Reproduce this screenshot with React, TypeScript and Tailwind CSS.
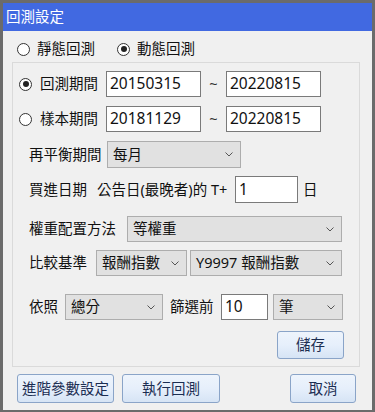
import React from 'react';

const font = { fontFamily: '"Noto Sans", "Noto Sans CJK TC", sans-serif' };

const Radio = ({ checked }: { checked?: boolean }) => (
  <span className="w-[13px] h-[13px] shrink-0 rounded-full border border-[#333] bg-white flex items-center justify-center">
    {checked && <span className="w-[6px] h-[6px] rounded-full bg-[#222]" />}
  </span>
);

const Chevron = () => (
  <svg width="8" height="5" viewBox="0 0 8 5" className="shrink-0">
    <path d="M0.5 0.5 L4 4 L7.5 0.5" fill="none" stroke="#555" strokeWidth="1" />
  </svg>
);

const Select = ({ value, w, h = 'h-[26px]' }: { value: string; w: string; h?: string }) => (
  <div className={`${w} ${h} shrink-0 bg-[#e1e1e1] border border-[#adadad] flex items-center justify-between pl-[5px] pr-[7px]`}>
    <span className="text-[14.5px] text-[#111] whitespace-nowrap">{value}</span>
    <Chevron />
  </div>
);

const Input = ({ value, w, h = 'h-[26px]' }: { value: string; w: string; h?: string }) => (
  <div className={`${w} ${h} shrink-0 bg-white border border-[#7a7a7a] flex items-center pl-[3px]`}>
    <span className="text-[15.5px] text-[#111] leading-none">{value}</span>
  </div>
);

const Button = ({ label, w, h }: { label: string; w: string; h: string }) => (
  <div className={`${w} ${h} shrink-0 rounded-[3px] border border-[#8aa4c8] bg-gradient-to-b from-[#eef4fc] via-[#e6effb] to-[#d6e4f5] flex items-center justify-center text-[14.5px] text-[#1b2d52]`}>
    {label}
  </div>
);

const App = () => {
  return (
    <div style={font} className="w-[375px] h-[412px] border-x-[3px] border-t-[3px] border-b-[2px] border-[#6b6b6b] bg-[#f0f0f0] flex flex-col overflow-hidden">
      {/* Title bar */}
      <div className="h-[28px] shrink-0 bg-[#4169e1] flex items-center pl-[3px] text-white text-[14.5px]">
        回測設定
      </div>

      {/* Mode radios */}
      <div className="mt-[8px] h-[20px] flex items-center pl-[14px] text-[14.5px] text-[#111]">
        <Radio />
        <span className="ml-[7px]">靜態回測</span>
        <span className="ml-[22px]"><Radio checked /></span>
        <span className="ml-[7px]">動態回測</span>
      </div>

      {/* Group box */}
      <div className="ml-[9px] mt-[3px] w-[348px] border border-[#dadada] flex flex-col pb-[7px] text-[14.5px] text-[#111]">
        <div className="mt-[8px] flex items-center pl-[6px]">
          <Radio checked />
          <span className="ml-[8px] w-[66px]">回測期間</span>
          <Input value="20150315" w="w-[95px]" />
          <span className="w-[25px] text-center text-[#333]">~</span>
          <Input value="20220815" w="w-[95px]" />
        </div>
        <div className="mt-[9px] flex items-center pl-[6px]">
          <Radio />
          <span className="ml-[8px] w-[66px]">樣本期間</span>
          <Input value="20181129" w="w-[95px]" />
          <span className="w-[25px] text-center text-[#333]">~</span>
          <Input value="20220815" w="w-[95px]" />
        </div>

        <div className="mt-[9px] flex items-center pl-[16px]">
          <span className="w-[78px]">再平衡期間</span>
          <Select value="每月" w="w-[134px]" h="h-[27px]" />
        </div>

        <div className="mt-[8px] flex items-center pl-[16px]">
          <span className="w-[68px]">買進日期</span>
          <span className="w-[138px] whitespace-nowrap">公告日(最晚者)的 T+</span>
          <Input value="1" w="w-[63px]" h="h-[27px]" />
          <span className="ml-[5px]">日</span>
        </div>

        <div className="mt-[13px] flex items-center pl-[16px]">
          <span className="w-[98px]">權重配置方法</span>
          <Select value="等權重" w="w-[215px]" />
        </div>

        <div className="mt-[8px] flex items-center pl-[16px]">
          <span className="w-[67px]">比較基準</span>
          <Select value="報酬指數" w="w-[91px]" />
          <span className="ml-[3px]" />
          <Select value="Y9997 報酬指數" w="w-[152px]" />
        </div>

        <div className="mt-[18px] flex items-center pl-[16px]">
          <span className="w-[36px]">依照</span>
          <Select value="總分" w="w-[98px]" />
          <span className="ml-[7px] w-[51px] whitespace-nowrap">篩選前</span>
          <Input value="10" w="w-[47px]" />
          <span className="ml-[5px]" />
          <Select value="筆" w="w-[70px]" />
        </div>

        <div className="mt-[11px] flex justify-end pr-[15px]">
          <Button label="儲存" w="w-[67px]" h="h-[28px]" />
        </div>
      </div>

      {/* Bottom buttons */}
      <div className="mt-[7px] flex items-center pl-[14px]">
        <Button label="進階參數設定" w="w-[97px]" h="h-[29px]" />
        <span className="ml-[8px]" />
        <Button label="執行回測" w="w-[98px]" h="h-[29px]" />
        <span className="ml-[70px]" />
        <Button label="取消" w="w-[66px]" h="h-[29px]" />
      </div>
    </div>
  );
};

export default App;
